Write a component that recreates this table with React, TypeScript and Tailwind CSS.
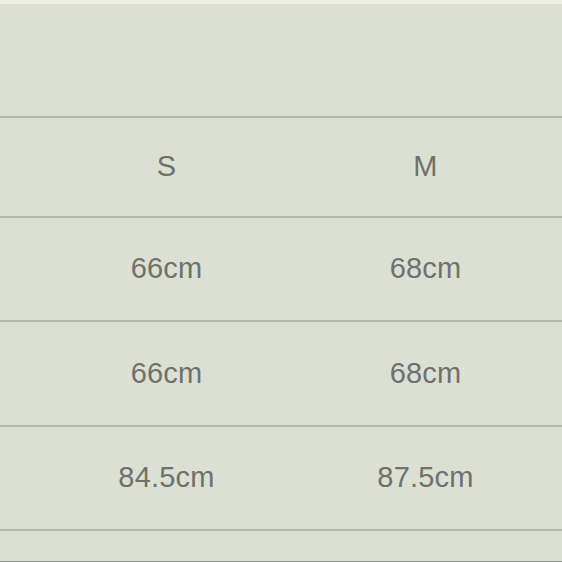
import React from "react";

const rows: [string, string, string][] = [
  ["S", "M", "h-[98px]"],
  ["66cm", "68cm", "h-[102px]"],
  ["66cm", "68cm", "h-[103px]"],
  ["84.5cm", "87.5cm", "h-[102px]"],
];

export default function App() {
  return (
    <div
      className="w-[562px] h-[562px] bg-[#dcdfd4] flex flex-col overflow-hidden text-[#6f716c]"
      style={{ fontFamily: '"Liberation Sans", Arial, sans-serif' }}
    >
      <div className="h-[4px] bg-[#eef0e7]" />
      <div className="h-[112px]" />
      {rows.map(([a, b, h], i) => (
        <div key={i} className="border-t-2 border-[#b4b7ad]">
          <div className={`${h} grid grid-cols-[37px_259px_259px] items-center text-[29px] tracking-[0.2px]`}>
            <div />
            <div className="text-center">{a}</div>
            <div className="text-center">{b}</div>
          </div>
        </div>
      ))}
      <div className="border-t-2 border-[#b4b7ad] flex-1" />
      <div className="h-[1px] bg-[#8d8f89]" />
    </div>
  );
}
